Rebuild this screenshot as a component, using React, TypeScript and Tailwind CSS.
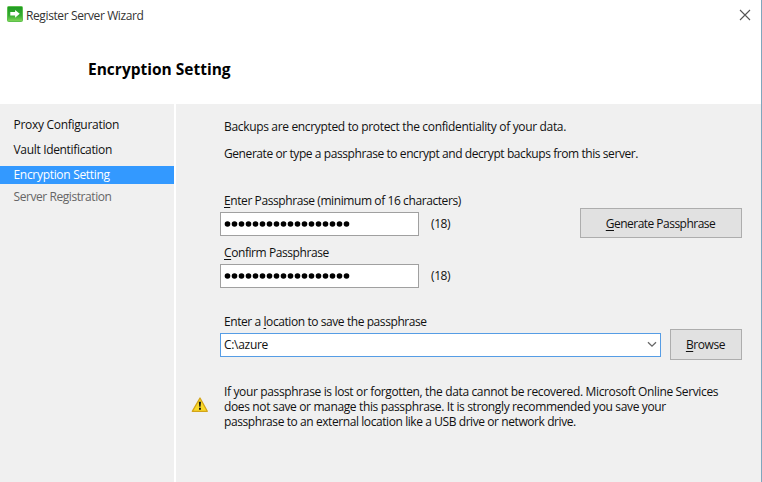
import type { ReactNode } from "react";

const steps = [
  { label: "Proxy Configuration", cls: "h-[25px] pb-[9px] text-[#111] tracking-[-0.3px]" },
  { label: "Vault Identification", cls: "h-[25px] pb-[9px] text-[#111] tracking-[-0.33px]" },
  { label: "Encryption Setting", cls: "h-[18px] pb-[2px] bg-[#3399ff] text-white tracking-[-0.31px]" },
  { label: "Server Registration", cls: "mt-[2px] h-[20px] text-[#666] tracking-[-0.43px]" },
];

function Line({ className = "", children }: { className?: string; children: ReactNode }) {
  return (
    <div className={"whitespace-nowrap " + className}>
      <span>{children}</span>
    </div>
  );
}

function Key({ children }: { children: ReactNode }) {
  return <span className="underline decoration-1 underline-offset-[2px]">{children}</span>;
}

function PasswordBox() {
  return (
    <div className="flex h-[24px] items-center">
      <div className="flex h-[24px] w-[199px] items-center border border-[#a0a0a0] bg-white pl-[3px]">
        <svg width="128" height="8" viewBox="0 0 128 8">
          {Array.from({ length: 18 }, (_, i) => (
            <circle key={i} cx={3.5 + i * 7} cy="4" r="2.8" fill="#000" />
          ))}
        </svg>
      </div>
      <Line className="-mt-[2px] ml-[12px] tracking-[-0.4px]">(18)</Line>
    </div>
  );
}

export default function App() {
  return (
    <div className="flex h-[482px] w-[762px] flex-col overflow-hidden border-r border-[#7fa6bd] bg-white font-['Open_Sans','Noto_Sans',sans-serif] text-[12px] leading-[15px] text-[#111]">
      <header className="h-[104px] shrink-0">
        <div className="flex h-[30px] items-center justify-between pl-[7px] pr-[10px]">
          <div className="flex items-center gap-[3px]">
            <svg width="16" height="16" viewBox="0 0 16 16" className="-mt-[3px]">
              <defs>
                <linearGradient id="green" x1="0" y1="0" x2="0" y2="1">
                  <stop offset="0" stopColor="#1f9a22" />
                  <stop offset="0.6" stopColor="#36ac32" />
                  <stop offset="1" stopColor="#83d75a" />
                </linearGradient>
              </defs>
              <rect x="0.5" y="0.5" width="15" height="15" rx="1" fill="url(#green)" stroke="#5cc04c" />
              <path d="M3.3 6h4.8V3.9L12.7 7.8l-4.6 3.9V9.6H3.3z" fill="#fff" />
            </svg>
            <Line className="tracking-[-0.39px] text-[#333]">Register Server Wizard</Line>
          </div>
          <svg width="12" height="12" viewBox="0 0 12 12" className="-mt-[1px]" stroke="#555" strokeWidth="1.1">
            <path d="M1 1l10 10M11 1L1 11" />
          </svg>
        </div>
        <h1 className="mt-[29px] pl-[88px] text-[15.5px] font-bold leading-[20px] text-black">Encryption Setting</h1>
      </header>
      <div className="flex min-h-0 flex-1">
        <nav className="w-[174px] shrink-0 bg-[#f0f0f0] pt-[12px]">
          {steps.map((s) => (
            <div key={s.label} className={"flex items-center pl-[13.5px] " + s.cls}>
              <Line>{s.label}</Line>
            </div>
          ))}
        </nav>
        <main className="ml-[2px] flex-1 bg-[#f0f0f0] pl-[44px] pt-[15px]">
          <div className="pl-[4px]">
            <Line className="tracking-[-0.335px]">Backups are encrypted to protect the confidentiality of your data.</Line>
            <Line className="mt-[12px] tracking-[-0.42px]">Generate or type a passphrase to encrypt and decrypt backups from this server.</Line>
          </div>
          <div className="mt-[32px] flex">
            <div className="w-[360px]">
              <Line className="mb-[4px] pl-[4px] tracking-[-0.41px]"><Key>E</Key>nter Passphrase (minimum of 16 characters)</Line>
              <PasswordBox />
              <Line className="mb-[4px] mt-[9px] pl-[4px] tracking-[-0.42px]"><Key>C</Key>onfirm Passphrase</Line>
              <PasswordBox />
            </div>
            <button className="mt-[15px] flex h-[30px] w-[162px] items-center justify-center border border-[#adadad] bg-[#e1e1e1] pr-[1px]">
              <Line className="tracking-[-0.52px]"><Key>G</Key>enerate Passphrase</Line>
            </button>
          </div>
          <Line className="mt-[26px] pl-[4px] tracking-[-0.42px]">Enter a <Key>l</Key>ocation to save the passphrase</Line>
          <div className="flex items-center">
            <div className="flex h-[24px] w-[441px] items-center justify-between border border-[#569de5] bg-white pl-[3px] pr-[3px]">
              <Line className="tracking-[-0.3px]">C:\azure</Line>
              <svg width="10" height="7" viewBox="0 0 10 7" fill="none" stroke="#666" strokeWidth="1.3">
                <path d="M1 1.2l4 4 4-4" />
              </svg>
            </div>
            <button className="ml-[9px] flex h-[31px] w-[72px] items-center justify-center border border-[#adadad] bg-[#e1e1e1] pr-[1px]">
              <Line className="tracking-[-0.4px]"><Key>B</Key>rowse</Line>
            </button>
          </div>
          <div className="-ml-[29px] mt-[24px] flex">
            <svg width="18" height="18" viewBox="0 0 18 18" className="mt-[12px]">
              <path d="M9 2L16.3 15.3H1.3z" fill="#fada2a" stroke="#d3a419" strokeWidth="1.3" strokeLinejoin="round" />
              <path d="M7.8 5.8h2.2l-.5 5h-1.2zM8 11.8h1.9v1.9H8z" fill="#111" />
            </svg>
            <div className="ml-[15px]">
              <Line className="tracking-[-0.355px]">If your passphrase is lost or forgotten, the data cannot be recovered. Microsoft Online Services</Line>
              <Line className="tracking-[-0.365px]">does not save or manage this passphrase. It is strongly recommended you save your</Line>
              <Line className="tracking-[-0.42px]">passphrase to an external location like a USB drive or network drive.</Line>
            </div>
          </div>
        </main>
      </div>
    </div>
  );
}
